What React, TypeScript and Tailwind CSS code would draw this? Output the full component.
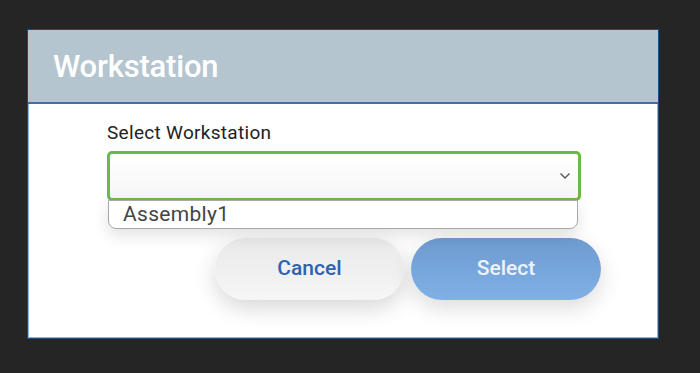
import React from 'react';

const App = () => {
  return (
    <div className="w-[700px] h-[373px] bg-[#252525] pt-[29px] pl-[27px] font-['Roboto',sans-serif]">
      <div className="w-[632px] h-[310px] bg-white border border-[#1d4a80] shadow-[inset_0_0_0_1px_#8fb3dc] flex flex-col">
        {/* Header */}
        <div className="h-[74px] bg-[#b5c5cf] border-b-2 border-[#3f6fa8] flex items-center pl-[25px] pt-[1px]">
          <h1 className="text-[31px] font-medium text-white tracking-[-0.2px] leading-none">Workstation</h1>
        </div>

        {/* Body */}
        <div className="flex flex-col pl-[79px] pt-[17px]">
          <label className="text-[19px] text-[#222] leading-[24px] tracking-[0.3px]">Select Workstation</label>
          <div className="relative mt-[6px] w-[474px]">
            <div className="h-[50px] border-[3px] border-[#6cb94a] rounded-[5px] bg-gradient-to-b from-white to-[#f6f6f6] flex items-center justify-end pr-[7px]">
              <svg width="12" height="8" viewBox="0 0 12 8" fill="none">
                <path d="M1.5 1.5 L6 6 L10.5 1.5" stroke="#555" strokeWidth="1.4" />
              </svg>
            </div>
            <div className="absolute left-[1px] right-[3px] top-[49px] h-[29px] bg-white border border-[#a9a9a9] rounded-b-[8px] shadow-[0_6px_16px_rgba(0,0,0,0.12)] flex items-center pl-[14px]">
              <span className="text-[21px] text-[#444] leading-none tracking-[0.3px]">Assembly1</span>
            </div>
          </div>

          <div className="flex gap-[7px] mt-[37px] ml-[108px]">
            <button className="w-[189px] h-[62px] rounded-full bg-gradient-to-b from-[#e9e9e9] to-[#f6f6f6] shadow-[0_8px_22px_rgba(0,0,0,0.16)] text-[21px] font-medium text-[#2e62b0]">
              Cancel
            </button>
            <button className="w-[190px] h-[62px] rounded-full bg-gradient-to-b from-[#6e9bd0] to-[#7fb0e6] shadow-[0_8px_22px_rgba(0,0,0,0.14)] text-[21px] font-medium text-[#eef3fa]">
              Select
            </button>
          </div>
        </div>
      </div>
    </div>
  );
};

export default App;
